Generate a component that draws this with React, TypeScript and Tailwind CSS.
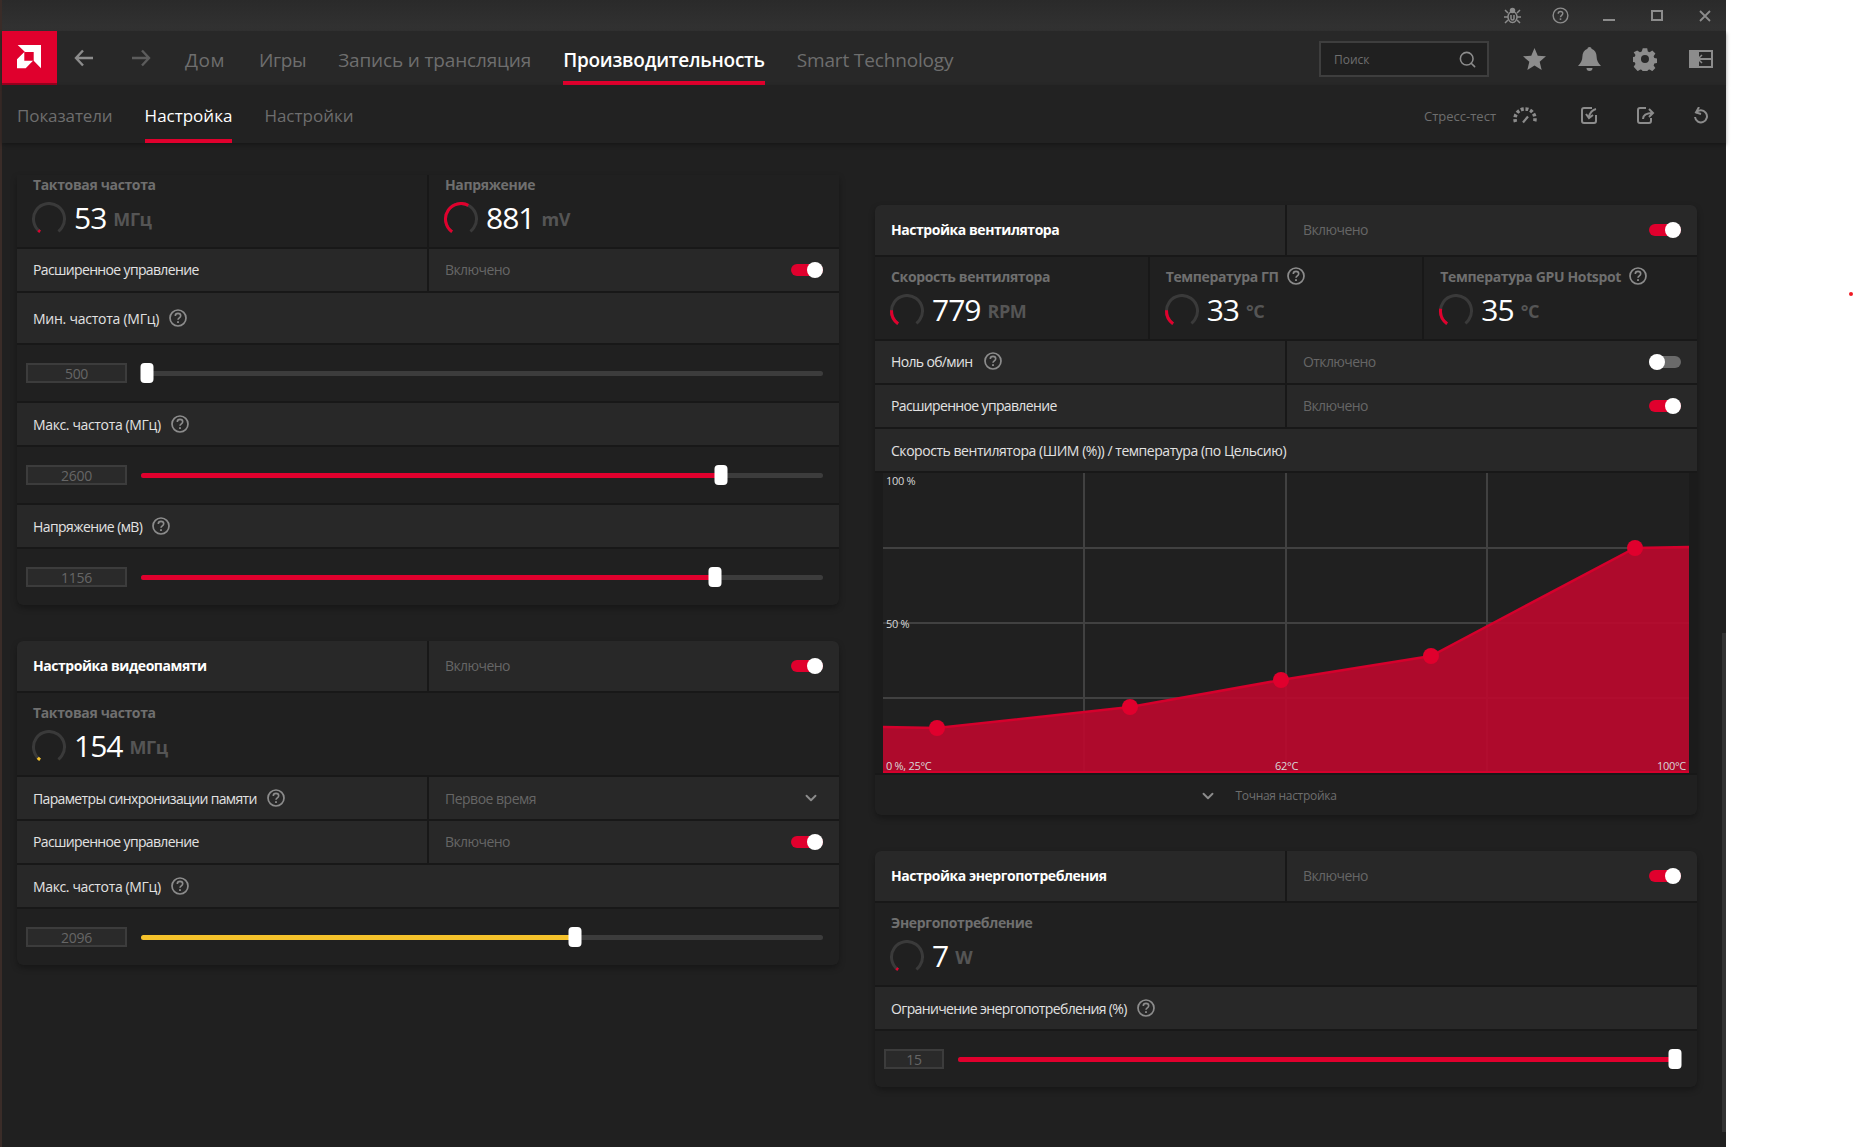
import {ChevronDown, Search} from 'lucide-react';

const FONT = "font-['Open_Sans','Noto_Sans',sans-serif]";

function Help() {
  return (
    <svg width="18" height="18" viewBox="0 0 18 18" fill="none" className="shrink-0 text-[#8c8c8c]">
      <circle cx="9" cy="9" r="8" stroke="currentColor" strokeWidth="1.700" />
      <path d="M6.300 6.900c0-1.500 1.100-2.500 2.700-2.500s2.700 1 2.700 2.400c0 2-2.700 2.100-2.700 4" stroke="currentColor" strokeWidth="1.600" />
      <rect x="8.100" y="12.200" width="1.800" height="1.800" fill="currentColor" />
    </svg>
  );
}

function Toggle({on = true}: {on?: boolean}) {
  return (
    <div className={`relative top-px h-3 w-8 rounded-full ${on ? 'bg-[#e0002d]' : 'bg-[#6a6a6a]'}`}>
      <div className={`absolute -top-0.5 h-4 w-4 rounded-full bg-white ${on ? 'right-0' : 'left-0'}`} />
    </div>
  );
}

function Gauge({value, color = '#e0002d'}: {value: number; color?: string}) {
  const full = 80;
  return (
    <svg width="36" height="32" viewBox="0 0 36 32" fill="none" className="-ml-0.5 shrink-0">
      <g transform="rotate(125 18 17)">
        <circle cx="18" cy="17" r="15.500" stroke="#3a3a3a" strokeWidth="3" pathLength={100} strokeDasharray={`${full} 100`} />
        <circle cx="18" cy="17" r="15.500" stroke={color} strokeWidth="3" pathLength={100} strokeDasharray={`${full * value} 100`} />
      </g>
    </svg>
  );
}

function Stat({
  label,
  value,
  unit,
  gauge,
  color,
  help,
  className = '',
}: {
  label: string;
  value: string;
  unit: string;
  gauge: number;
  color?: string;
  help?: boolean;
  className?: string;
}) {
  return (
    <div className={`h-full bg-[#202020] pl-4 ${className}`}>
      <div className="flex h-[18px] items-center gap-2 text-[14px] font-bold tracking-[-0.35px] text-[#6f6f6f]">
        {label}
        {help ? <Help /> : null}
      </div>
      <div className="mt-[9px] flex items-center">
        <Gauge value={gauge} color={color} />
        <span className="ml-[7px] text-[30px] leading-8 tracking-[-1px] text-white">{value}</span>
        <span className="ml-[7px] mt-[2px] text-[18px] font-bold tracking-[-0.4px] text-[#555]">{unit}</span>
      </div>
    </div>
  );
}

function Row({
  label,
  status,
  bold,
  help,
  off,
  className = 'h-[42px]',
}: {
  label: string;
  status: string;
  bold?: boolean;
  help?: boolean;
  off?: boolean;
  className?: string;
}) {
  return (
    <div className={`grid grid-cols-2 gap-0.5 ${className}`}>
      <div className={`flex items-center gap-3 bg-[#282828] pb-0.5 pl-4 text-[14px] ${bold ? 'font-bold tracking-[-0.45px] text-white' : 'tracking-[-0.65px] text-[#e2e2e2]'}`}>
        {label}
        {help ? <Help /> : null}
      </div>
      <div className="flex items-center justify-between bg-[#282828] pb-0.5 pr-4 pl-4 text-[14px] tracking-[-0.6px] text-[#666]">
        {status}
        <Toggle on={!off} />
      </div>
    </div>
  );
}

function LabelRow({
  label,
  help = true,
  className = 'h-[42px]',
  track = 'tracking-[-0.36px]',
}: {
  label: string;
  help?: boolean;
  className?: string;
  track?: string;
}) {
  return (
    <div className={`flex items-center gap-2.5 bg-[#282828] pl-4 text-[14px] text-[#e2e2e2] ${track} ${className}`}>
      {label}
      {help ? <Help /> : null}
    </div>
  );
}

function SliderRow({
  value,
  pct,
  color = '#e0002d',
  inputClass = 'w-[101px]',
}: {
  value: string;
  pct: number;
  color?: string;
  inputClass?: string;
}) {
  return (
    <div className="flex h-14 items-center bg-[#202020] pr-4 pl-[9px]">
      <div className={`flex h-5 items-center justify-center border-2 border-[#3c3c3c] bg-[#2a2a2a] text-[14px] tracking-[-0.3px] text-[#666] ${inputClass}`}>
        {value}
      </div>
      <div className="relative ml-[14px] h-[5px] flex-1 rounded-full bg-[#3c3c3c]">
        <div className="absolute inset-y-0 left-0 rounded-full" style={{width: `${pct}%`, backgroundColor: color}} />
        <div
          className="absolute -top-[8px] h-5 w-[13px] -translate-x-1/2 rounded-sm bg-white"
          style={{left: `${pct}%`}}
        />
      </div>
    </div>
  );
}

function FanChart() {
  const pts = [
    [54, 255],
    [247, 234],
    [398, 207],
    [548, 183],
    [752, 75],
  ];
  const line = `0,254 ${pts.map((p) => p.join(',')).join(' ')} 806,74`;
  return (
    <div className="bg-[#1b1b1b] px-2">
      <div className="relative h-[300px] bg-[#202020] text-[11px] tracking-[-0.3px] text-[#d8d8d8]">
        <svg width="806" height="300" viewBox="0 0 806 300" className="block">
          {[201, 403, 604].map((x) => (
            <line key={x} x1={x} y1="0" x2={x} y2="300" stroke="#414141" strokeWidth="2" />
          ))}
          {[75, 150, 225].map((y) => (
            <line key={y} x1="0" y1={y} x2="806" y2={y} stroke="#414141" strokeWidth="2" />
          ))}
          <polygon points={`0,300 ${line} 806,300`} fill="#be082e" fillOpacity="0.9" />
          <polyline points={line} fill="none" stroke="#d5002c" strokeWidth="2.500" />
          <line x1="0" y1="299" x2="806" y2="299" stroke="#d5002c" strokeWidth="2" />
          {pts.map((p) => (
            <circle key={p[0]} cx={p[0]} cy={p[1]} r="8" fill="#e0002d" />
          ))}
        </svg>
        <span className="absolute top-0 left-[3px]">100 %</span>
        <span className="absolute top-[143px] left-[3px]">50 %</span>
        <span className="absolute -bottom-px left-[3px]">0 %, 25°C</span>
        <span className="absolute -bottom-px left-[392px]">62°C</span>
        <span className="absolute right-[3px] -bottom-px">100°C</span>
      </div>
    </div>
  );
}

function Logo() {
  return (
    <svg width="24" height="24" viewBox="0 0 24 24" fill="white" className="-ml-0.5">
      <polygon points="0.700,0 24,0 24,23.300 16.700,15.700 16.700,7 8,7" />
      <polygon points="0,14.300 7.300,7 7.300,15.700 16,15.700 8.700,23.300 0,23.300" />
    </svg>
  );
}

function TitleIcons() {
  return (
    <div className="flex items-center gap-[31px] pr-[13px] text-[#8c8c8c]">
      <div className="flex w-[17px] justify-center">
        <svg width="17" height="17" viewBox="0 0 17 17" fill="none" stroke="currentColor" strokeWidth="1.500">
          <ellipse cx="8.500" cy="10" rx="4.500" ry="5.500" />
          <circle cx="8.500" cy="3.500" r="2" fill="currentColor" />
          <path d="M1 3l3 3M16 3l-3 3M0 10h4M13 10h4M1 16l3-3M16 16l-3-3M7 8v3.500a1.500 1.500 0 0 0 3 0V8" />
        </svg>
      </div>
      <div className="flex w-[17px] justify-center">
        <svg width="17" height="17" viewBox="0 0 18 18" fill="none" stroke="currentColor">
          <circle cx="9" cy="9" r="7.800" strokeWidth="1.500" />
          <path d="M6.600 7.100c0-1.400 1-2.300 2.400-2.300s2.400.9 2.400 2.200c0 1.900-2.400 1.900-2.400 3.800" strokeWidth="1.500" />
          <path d="M9 12v1.700" strokeWidth="1.700" />
        </svg>
      </div>
      <div className="flex w-[17px] justify-center">
        <div className="mt-[9px] h-0.5 w-3 bg-current" />
      </div>
      <div className="flex w-[17px] justify-center">
        <div className="h-[11px] w-3 border-2 border-current" />
      </div>
      <div className="flex w-[17px] justify-center">
        <svg width="12" height="12" viewBox="0 0 12 12" stroke="currentColor" strokeWidth="1.800">
          <path d="M1 1l10 10M11 1L1 11" />
        </svg>
      </div>
    </div>
  );
}

function NavIcons() {
  return (
    <div className="mt-0.5 flex items-center gap-8 text-[#8c8c8c]">
      <svg width="23" height="22" viewBox="0 0 24 23" fill="currentColor">
        <path d="M12 0l3.400 8 8.600.7-6.600 5.600 2.100 8.700-7.500-4.600L4.500 23l2.100-8.700L0 8.700 8.600 8z" />
      </svg>
      <svg width="23" height="25" viewBox="0 0 23 25" fill="currentColor">
        <path d="M11.500 0c1.200 0 2 .8 2 1.800C17 3 18.500 6 18.600 9.500c.1 3.800 1.400 6.500 4.400 9.500H0c3-3 4.300-5.700 4.400-9.500C4.500 6 6 3 9.500 1.800c0-1 .8-1.800 2-1.800z" />
        <path d="M8.500 21h6a3 3 0 0 1-6 0z" />
      </svg>
      <svg width="24" height="24" viewBox="0 0 24 24" fill="currentColor">
        <path
          fillRule="evenodd"
          d="M9.500 0h5l.7 3.500 2 .9 3-2 3.500 3.500-2 3 .8 2 3.500.6v5l-3.500.7-.8 2 2 3-3.500 3.500-3-2-2 .8-.7 3.500h-5l-.7-3.500-2-.8-3 2L-.7 20.700l2-3-.8-2-3.500-.7V10l3.500-.6.8-2-2-3L3.300 2.400l3 2 2-.9zM12 7.500a4.500 4.500 0 1 0 0 9 4.500 4.500 0 0 0 0-9z"
          transform="translate(1.300 1.300) scale(.89)"
        />
      </svg>
      <svg width="24" height="18" viewBox="0 0 24 18">
        <path fill="currentColor" fillRule="evenodd" d="M0 0h24v18H0zM10 2v6h12V2zM10 10v6h12v-6z" />
        <path fill="none" stroke="currentColor" strokeWidth="1.500" d="M21 9H9M13 5L9 9l4 4" />
      </svg>
    </div>
  );
}

function ToolIcons() {
  return (
    <div className="-mt-0.5 flex items-center text-[#8c8c8c]">
      <svg width="24" height="15" viewBox="0 0 24 15" fill="none" stroke="currentColor" className="ml-[17px] overflow-visible">
        <path d="M2.500 14A10 10 0 1 1 21.500 14" strokeWidth="3.500" strokeDasharray="3 1.800" />
        <path d="M10 14.500l5-6" strokeWidth="2.200" />
      </svg>
      <svg width="17" height="17" viewBox="0 0 17 17" fill="none" stroke="currentColor" strokeWidth="2" className="ml-[44px]">
        <path d="M11 1H3a2 2 0 0 0-2 2v11a2 2 0 0 0 2 2h10a2 2 0 0 0 2-2V8" />
        <path d="M15 2c-4 1-6 3-7 8M5 7l3 4 4-3" />
      </svg>
      <svg width="18" height="17" viewBox="0 0 18 17" fill="none" stroke="currentColor" strokeWidth="2" className="ml-[39px]">
        <path d="M9 1H3a2 2 0 0 0-2 2v11a2 2 0 0 0 2 2h9a2 2 0 0 0 2-2v-3" />
        <path d="M6 12c0-4 3-6 10-6M12 2l4 4-4 4" />
      </svg>
      <svg width="15" height="18" viewBox="0 0 15 18" fill="none" stroke="currentColor" strokeWidth="2" className="ml-[38px]">
        <path d="M3 6a6 6 0 1 1-1 4" />
        <path d="M6 0L3 5.500l5 1.500" />
      </svg>
    </div>
  );
}

export default function App() {
  return (
    <div className={`relative flex h-[1147px] w-[1854px] overflow-hidden bg-white text-[14px] ${FONT}`}>
      <div className="w-0.5 bg-[#3a2c28]" />
      <div className="relative flex w-[1724px] flex-col bg-[#202020]">
        <header className="flex h-[31px] items-center justify-end bg-gradient-to-b from-[#2a2a2a] to-[#323232]">
          <TitleIcons />
        </header>
        <nav className="flex h-[54px] items-stretch bg-[#282828] shadow-[0_2px_4px_rgba(0,0,0,0.35)]">
          <div className="flex w-[55px] items-center justify-center border-b-2 border-[#98001f] bg-[#e0002d]">
            <Logo />
          </div>
          <svg width="20" height="18" viewBox="0 0 20 18" fill="none" stroke="#8c8c8c" strokeWidth="2.400" className="ml-[17px] self-center">
            <path d="M19 9H2M9 1.500L2 9l7 7.500" />
          </svg>
          <svg width="20" height="18" viewBox="0 0 20 18" fill="none" stroke="#5c5c5c" strokeWidth="2.400" className="ml-[37px] self-center">
            <path d="M1 9h17M11 1.500L18 9l-7 7.500" />
          </svg>
          <div className="ml-[34px] flex items-stretch gap-8 text-[19px] tracking-[-0.15px] text-[#6e6e6e]">
            <span className="mr-0.5 flex items-center pt-1 tracking-[0.5px]">Дом</span>
            <span className="flex items-center pt-1 tracking-[-0.4px]">Игры</span>
            <span className="flex items-center pt-1">Запись и трансляция</span>
            <span className="flex items-center border-b-4 border-[#e0002d] pt-2 font-semibold tracking-[-0.25px] text-white">Производительность</span>
            <span className="flex items-center pt-1">Smart Technology</span>
          </div>
          <div className="ml-auto flex items-center pr-[13px]">
            <div className="relative mt-0.5 mr-[34px] flex h-9 w-[170px] items-center border-2 border-[#3e3e3e] bg-[#202020] pt-px pl-[13px] text-[12px] text-[#6e6e6e]">
              Поиск
              <Search size={19} strokeWidth={2} className="absolute right-2.5 text-[#8c8c8c]" />
            </div>
            <NavIcons />
          </div>
        </nav>
        <div className="flex h-[58px] items-stretch bg-[#222] pl-[15px] shadow-[0_2px_4px_rgba(0,0,0,0.3)]">
          <div className="flex items-stretch gap-8 text-[17px] text-[#6e6e6e]">
            <span className="flex items-center border-b-4 border-transparent pt-[8px] tracking-[-0.1px]">Показатели</span>
            <span className="flex items-center border-b-4 border-[#e0002d] pt-[8px] text-white">Настройка</span>
            <span className="flex items-center border-b-4 border-transparent pt-[8px]">Настройки</span>
          </div>
          <div className="ml-auto flex items-center pt-[5px] pr-[18px]">
            <span className="text-[13px] text-[#6e6e6e]">Стресс-тест</span>
            <ToolIcons />
          </div>
        </div>
        <main className="grid flex-1 grid-cols-2 items-start gap-9 pt-8 pr-[29px] pl-[15px]">
          <div className="flex flex-col gap-9">
            <section className="flex flex-col gap-0.5 overflow-hidden rounded-b-md bg-[#181818] shadow-[0_3px_6px_rgba(0,0,0,0.3)]">
              <div className="grid h-[72px] grid-cols-2 gap-0.5">
                <Stat label="Тактовая частота" value="53" unit="МГц" gauge={0.03} />
                <Stat label="Напряжение" value="881" unit="mV" gauge={0.6} />
              </div>
              <Row label="Расширенное управление" status="Включено" />
              <LabelRow label="Мин. частота (МГц)" className="h-[50px]" track="tracking-[-0.25px]" />
              <SliderRow value="500" pct={0.9} />
              <LabelRow label="Макс. частота (МГц)" />
              <SliderRow value="2600" pct={85} />
              <LabelRow label="Напряжение (мВ)" track="tracking-[-0.58px]" />
              <SliderRow value="1156" pct={84.2} />
            </section>
            <section className="flex flex-col gap-0.5 overflow-hidden rounded-md bg-[#181818] shadow-[0_3px_6px_rgba(0,0,0,0.3)]">
              <Row label="Настройка видеопамяти" status="Включено" bold className="h-[50px]" />
              <div className="h-[82px]">
                <Stat label="Тактовая частота" value="154" unit="МГц" gauge={0.04} color="#f5c22b" className="pt-[10px]" />
              </div>
              <div className="grid h-[42px] grid-cols-2 gap-0.5">
                <div className="flex items-center gap-2.5 bg-[#282828] pl-4 tracking-[-0.65px] text-[#e2e2e2]">
                  Параметры синхронизации памяти
                  <Help />
                </div>
                <div className="flex items-center justify-between bg-[#282828] pr-[19px] pl-4 tracking-[-0.5px] text-[#666]">
                  Первое время
                  <ChevronDown size={18} strokeWidth={2.500} className="text-[#8c8c8c]" />
                </div>
              </div>
              <Row label="Расширенное управление" status="Включено" />
              <LabelRow label="Макс. частота (МГц)" />
              <SliderRow value="2096" pct={63.6} color="#f5c22b" />
            </section>
          </div>
          <div className="flex flex-col gap-9 pt-[30px]">
            <section className="flex flex-col gap-0.5 overflow-hidden rounded-md bg-[#181818] shadow-[0_3px_6px_rgba(0,0,0,0.3)]">
              <Row label="Настройка вентилятора" status="Включено" bold className="h-[50px]" />
              <div className="grid h-[82px] grid-cols-3 gap-0.5">
                <Stat label="Скорость вентилятора" value="779" unit="RPM" gauge={0.2} className="pt-[10px]" />
                <Stat label="Температура ГП" value="33" unit="°C" gauge={0.2} help className="pt-[10px]" />
                <Stat label="Температура GPU Hotspot" value="35" unit="°C" gauge={0.22} help className="pt-[10px]" />
              </div>
              <Row label="Ноль об/мин" status="Отключено" help off />
              <Row label="Расширенное управление" status="Включено" />
              <LabelRow
                label="Скорость вентилятора (ШИМ (%)) / температура (по Цельсию)"
                help={false}
                track="tracking-[-0.46px]"
              />
              <FanChart />
              <div className="flex h-10 items-center justify-center bg-[#202020] pt-0.5 text-[12px] tracking-[-0.3px] text-[#6e6e6e]">
                <span className="relative">
                  <ChevronDown size={18} strokeWidth={2.500} className="absolute top-0 -left-[36px] text-[#8c8c8c]" />
                  Точная настройка
                </span>
              </div>
            </section>
            <section className="flex flex-col gap-0.5 overflow-hidden rounded-md bg-[#181818] shadow-[0_3px_6px_rgba(0,0,0,0.3)]">
              <Row label="Настройка энергопотребления" status="Включено" bold className="h-[50px]" />
              <div className="h-[82px]">
                <Stat label="Энергопотребление" value="7" unit="W" gauge={0.03} className="pt-[10px]" />
              </div>
              <LabelRow label="Ограничение энергопотребления (%)" track="tracking-[-0.63px]" />
              <SliderRow value="15" pct={99.2} inputClass="w-[60px]" />
            </section>
          </div>
        </main>
        <div className="absolute top-[633px] right-0 bottom-[15px] w-1 bg-[#333]" />
      </div>
      <div className="absolute top-[292px] left-[1849px] h-1 w-1 rounded-full bg-[#f01a24]" />
    </div>
  );
}
